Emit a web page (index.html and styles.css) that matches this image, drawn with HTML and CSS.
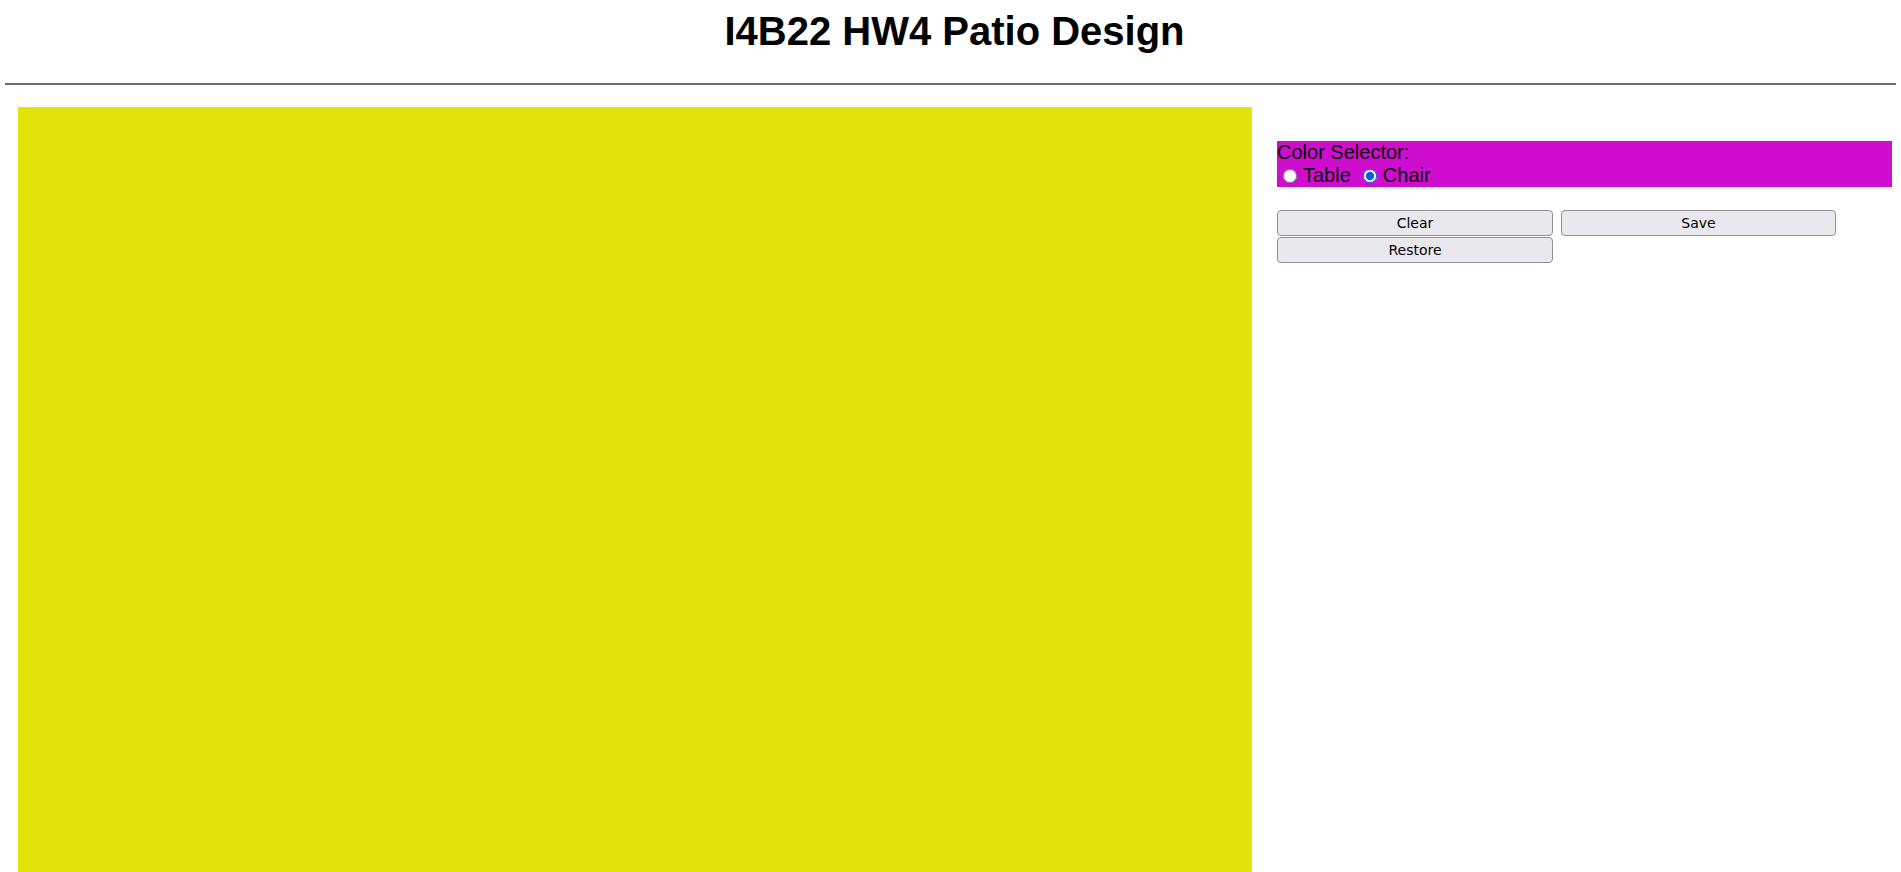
FILE: index.html
```html
<!DOCTYPE html>
<html lang="en">
<head>
<meta charset="utf-8">
<title>I4B22 HW4 Patio Design</title>
<link rel="stylesheet" href="styles.css">
</head>
<body>
<header class="page-header">
  <h1 class="title">I4B22 HW4 Patio Design</h1>
</header>
<hr class="rule">
<main class="layout">
  <div class="canvas"></div>
  <aside class="panel">
    <div class="selector">
      <div class="selector-label">Color Selector:</div>
      <div class="selector-options">
        <label class="option"><input class="radio radio-first" type="radio" name="target" value="table">Table</label>
        <label class="option"><input class="radio" type="radio" name="target" value="chair" checked>Chair</label>
      </div>
    </div>
    <div class="actions">
      <button class="btn" type="button">Clear</button>
      <button class="btn" type="button">Save</button>
      <button class="btn" type="button">Restore</button>
    </div>
  </aside>
</main>
</body>
</html>
```

FILE: styles.css
```css
html, body {
  margin: 0;
  padding: 0;
  background: #ffffff;
  overflow: hidden;
}

body {
  font-family: "Liberation Sans", Arial, sans-serif;
  color: #000;
  padding: 0 5px;
}

.page-header {
  display: flex;
  justify-content: center;
  padding-left: 8px;
}

.title {
  margin: 8px 0 0;
  font-size: 40px;
  font-weight: bold;
  line-height: 46px;
  text-align: center;
}

.rule {
  margin: 29px 0 0;
  border: 0;
  height: 2px;
  background: #6b6b6b;
}

.layout {
  display: flex;
  align-items: flex-start;
  gap: 25px;
  padding: 22px 0 0 13px;
}

.canvas {
  width: 1234px;
  height: 820px;
  flex: none;
  background: #e2e30a;
}

.panel {
  flex: none;
  width: 615px;
  padding-top: 34px;
}

.selector {
  background: #cf0dcf;
  font-size: 20px;
  line-height: 23px;
}

.selector-options {
  display: flex;
  align-items: center;
  gap: 12px;
}

.option {
  display: inline-flex;
  align-items: center;
}

.radio {
  width: 14px;
  height: 14px;
  margin: 1px 6px 0 0;
  accent-color: #0a62d6;
}

.radio-first {
  margin-left: 6px;
}

.actions {
  margin-top: 23px;
  display: grid;
  grid-template-columns: 276px 275px;
  column-gap: 8px;
  row-gap: 1px;
}

.btn {
  height: 26px;
  padding: 0;
  font-family: "DejaVu Sans", Verdana, sans-serif;
  font-size: 14px;
  color: #000;
  background: #e9e9ed;
  border: 1px solid #8f8f9d;
  border-radius: 4px;
}
```
